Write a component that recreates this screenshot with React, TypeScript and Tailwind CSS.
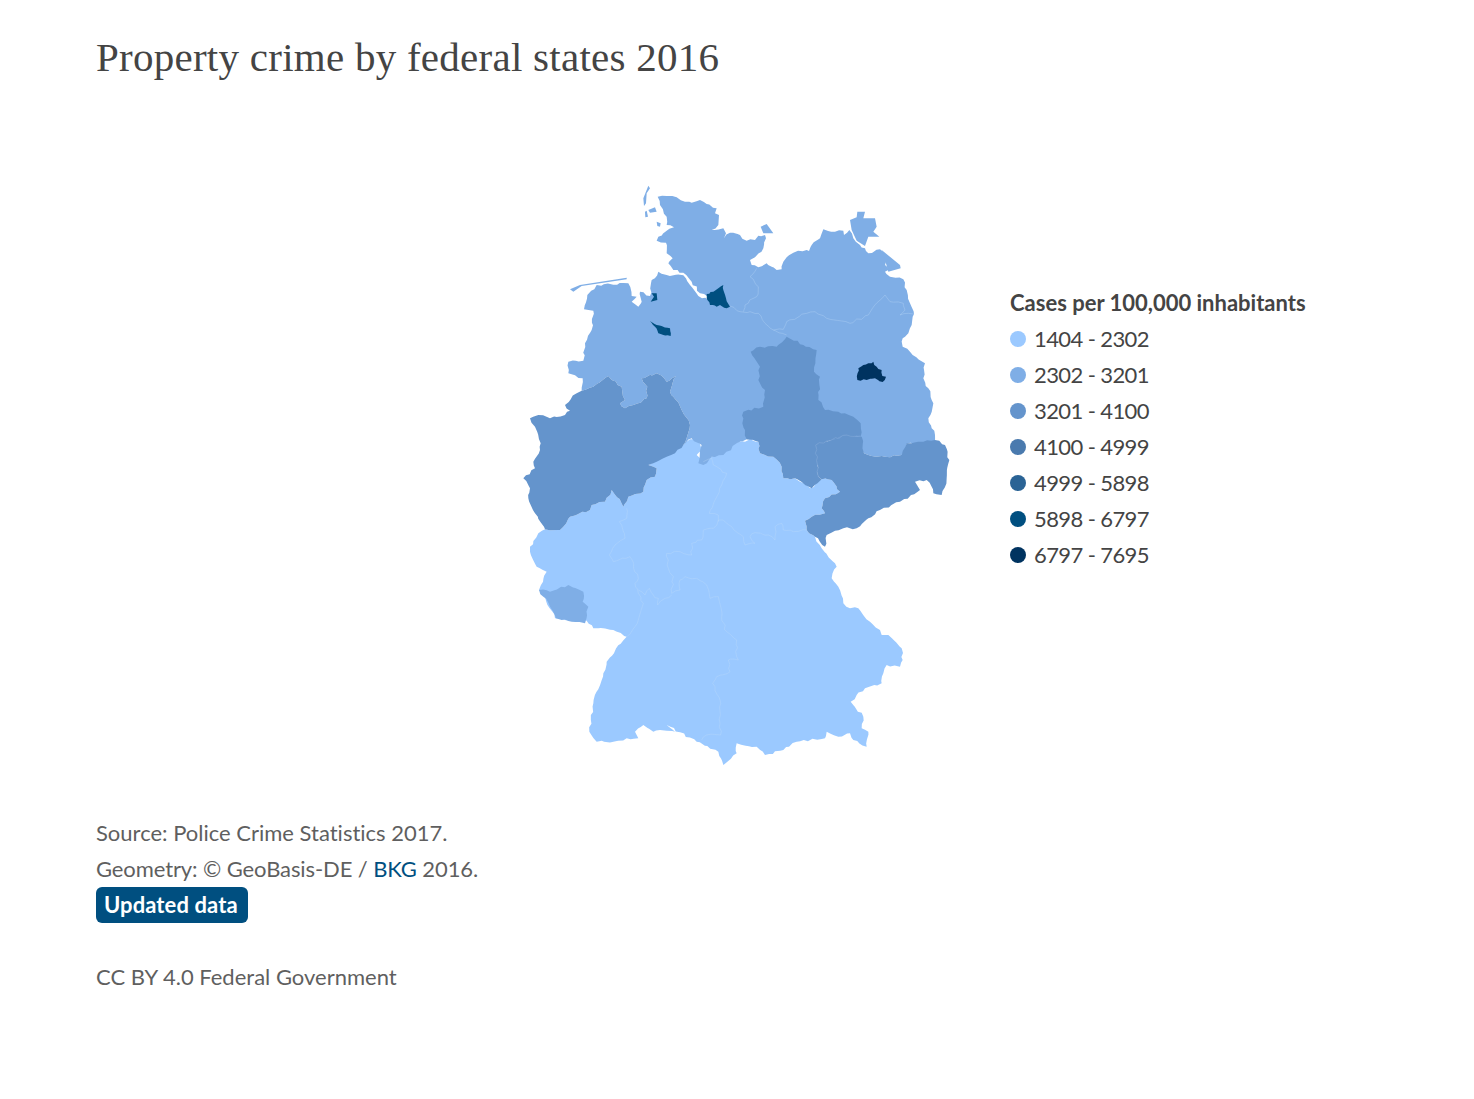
const legend = [
  { label: "1404 - 2302", color: "bg-[#9bc9ff]" },
  { label: "2302 - 3201", color: "bg-[#7faee6]" },
  { label: "3201 - 4100", color: "bg-[#6494cc]" },
  { label: "4100 - 4999", color: "bg-[#4a7aae]" },
  { label: "4999 - 5898", color: "bg-[#2a6395]" },
  { label: "5898 - 6797", color: "bg-[#004f80]" },
  { label: "6797 - 7695", color: "bg-[#003360]" },
];

// all map coordinates are in 3x px, origin at the map's top left
const north =
  "443,80 470,78 500,82 525,95 545,98 570,90 590,102 620,115 615,130 627,135 625,165 605,180 640,175 648,190 642,205 660,188 690,195 710,212 735,210 745,197 765,195 768,205 760,235 735,262 720,270 725,285 745,292 770,280 785,290 800,300 815,298 820,275 830,262 850,248 890,240 897,243 905,225 930,205 940,178 975,185 1000,182 1002,195 1018,180 1030,205 1050,225 1065,235 1075,250 1110,238 1130,262 1125,285 1135,300 1125,305 1140,320 1180,328 1190,360 1200,400 1212,432 1205,465 1195,490 1178,505 1178,530 1200,545 1245,580 1240,625 1255,655 1265,690 1270,700 1255,745 1265,775 1275,795 1275,820 1240,818 1190,822 1175,855 1125,860 1075,855 1062,850 1040,810 800,810 710,808 680,820 640,855 605,860 580,885 565,880 575,825 545,805 520,825 540,765 515,720 490,680 480,665 498,618 470,635 440,610 395,625 412,650 410,685 370,705 345,715 330,700 345,690 335,650 305,630 295,618 250,650 215,662 218,625 175,610 175,575 220,572 225,520 245,480 250,422 222,418 232,375 260,345 355,340 365,378 380,380 365,395 385,410 395,395 390,365 420,378 425,330 445,305 470,315 520,316 540,345 565,378 595,390 590,378 570,370 545,335 520,308 490,300 475,280 488,265 470,250 468,218 440,212 445,200 470,182 492,172 470,165 470,140 450,105";

const islands = [
  "415,47 420,55 410,70 408,100 402,108 400,85",
  "415,120 435,112 440,125 420,128",
  "405,125 410,122 414,140 406,142",
  "440,155 452,160 450,170 442,168",
  "752,170 770,162 790,190 760,190",
  "1020,150 1040,142 1042,125 1065,125 1060,145 1095,145 1100,170 1090,185 1108,200 1075,200 1065,228 1040,212 1025,180",
  "1115,240 1170,285 1172,295 1135,305 1125,270",
  "180,358 210,345 350,323 350,328 215,348 190,365",
];

const nrw =
  "60,745 85,735 120,745 165,735 180,722 165,705 200,670 215,662 250,650 295,618 305,630 335,650 345,690 330,700 345,715 370,705 410,685 412,650 395,625 440,610 470,635 498,618 480,665 490,680 515,720 540,765 520,825 495,850 470,860 440,875 415,885 440,895 435,920 410,930 400,965 355,980 340,1010 305,960 285,995 245,1005 240,1020 180,1040 160,1070 150,1080 105,1078 75,1030 55,985 60,955 40,925 75,895 70,875 90,840 92,820 75,770";

const anhalt =
  "722,545 750,530 800,530 830,500 880,525 920,540 912,605 930,620 925,690 945,720 985,725 1030,740 1052,760 1052,800 1010,797 950,815 920,825 925,860 925,920 935,928 905,955 855,925 820,925 815,890 790,860 750,850 745,815 715,808 710,808 705,780 697,760 700,725 760,710 765,660 745,630 750,590";

const saxony =
  "1050,800 1010,797 950,815 917,825 925,920 935,928 965,930 990,965 945,985 935,1015 945,1030 905,1040 885,1052 890,1080 915,1100 945,1130 950,1095 1000,1075 1040,1075 1075,1045 1110,1020 1170,995 1230,960 1215,935 1250,930 1265,950 1270,970 1295,975 1310,925 1318,870 1305,825 1275,810 1240,815 1190,820 1175,855 1125,860 1075,855 1062,850 1055,800";

const south =
  "60,1130 85,1090 105,1078 150,1080 160,1070 180,1040 240,1020 245,1005 285,995 305,960 340,1010 355,980 400,965 410,930 435,920 440,895 415,885 440,865 465,840 490,845 520,825 540,808 565,810 575,840 560,855 580,875 605,860 640,835 675,820 705,815 720,808 745,815 750,850 790,860 815,890 820,925 855,925 900,955 935,928 965,930 990,965 945,985 935,1015 945,1030 905,1040 885,1052 890,1080 915,1100 935,1135 975,1180 980,1190 965,1225 985,1250 1000,1300 1020,1315 1045,1315 1080,1355 1110,1380 1115,1395 1135,1395 1175,1435 1178,1470 1170,1490 1130,1485 1120,1510 1115,1540 1065,1555 1040,1575 1022,1595 1060,1640 1055,1675 1075,1685 1070,1730 1030,1710 1020,1690 985,1700 950,1685 945,1705 860,1715 820,1740 765,1755 740,1730 680,1720 680,1750 640,1785 625,1745 560,1715 470,1665 495,1685 450,1680 430,1685 400,1665 375,1685 385,1705 350,1705 310,1715 260,1715 238,1685 250,1600 280,1510 290,1475 350,1400 310,1380 250,1375 230,1352 135,1345 105,1280 87,1260 110,1205 80,1190 60,1145";

const saarland =
  "87,1260 120,1265 175,1245 220,1265 218,1295 235,1310 225,1360 185,1355 155,1350 138,1345 120,1310 100,1280";

const hamburg = "590,372 610,365 625,355 640,345 640,360 648,385 660,410 650,415 630,405 620,410 600,405 590,385";
const bremerhaven = "425,370 440,370 442,390 422,395 432,380";
const bremen = "420,453 440,465 480,475 482,498 460,495 445,490 435,470";
const berlin = "1045,595 1060,585 1075,580 1090,575 1100,590 1115,600 1117,618 1128,620 1118,636 1095,625 1070,630 1042,630";

// state borders inside a colour block
const borders = [
  "740,295 720,320 745,350 740,380 705,405 700,425",
  "660,408 690,425 720,425 745,430 765,460 790,480 830,495",
  "790,480 820,478 830,455 890,430 915,425 950,445 1020,460 1075,435 1125,375 1140,395 1180,400 1185,420 1170,435 1195,430 1212,432",
  "350,1015 350,1045 328,1055 345,1105 315,1125 298,1155 310,1175 360,1160 385,1225 375,1240 385,1270 400,1300 375,1370 350,1400",
  "385,1260 405,1275 418,1255 430,1275 445,1285 443,1305 465,1285 485,1275",
  "580,875 605,865 610,885 650,910 635,945 615,990 598,1030 625,1035 625,1055",
  "470,1150 510,1145 545,1155 545,1120 575,1110 580,1080 610,1075 625,1050 640,1050 665,1070 700,1100 705,1125 735,1120 720,1100 735,1088 775,1095 795,1110 795,1070 815,1060 820,1080 850,1085 890,1080",
  "470,1150 475,1195 490,1220 485,1270 510,1260 510,1230 525,1220 560,1225 590,1245 600,1285 625,1280 635,1345 650,1385 680,1410 680,1460 685,1470 655,1470 660,1505 620,1520 608,1540 630,1590 630,1660 632,1695 590,1695 575,1710",
];

// breaks straight segments into small wiggles, keyed on position so shared edges stay together
function rough(points: string, closed = true, amp = 3, step = 12) {
  const pts = points.split(" ").map((p) => p.split(",").map(Number));
  const out: string[] = [];
  const count = closed ? pts.length : pts.length - 1;
  for (let i = 0; i < count; i++) {
    const [ax, ay] = pts[i];
    const [bx, by] = pts[(i + 1) % pts.length];
    const n = Math.max(1, Math.round(Math.hypot(bx - ax, by - ay) / step));
    for (let k = 0; k < n; k++) {
      const x = ax + ((bx - ax) * k) / n;
      const y = ay + ((by - ay) * k) / n;
      const dx = k === 0 ? 0 : amp * Math.sin(x * 0.73 + y * 1.31);
      const dy = k === 0 ? 0 : amp * Math.sin(x * 1.17 - y * 0.59);
      out.push(`${(x + dx).toFixed(1)},${(y + dy).toFixed(1)}`);
    }
  }
  if (!closed) out.push(pts[pts.length - 1].join(","));
  return out.join(" ");
}

function GermanyMap() {
  return (
    <svg width="450" height="605" viewBox="0 0 1350 1815" className="shrink-0">
      <polygon points={rough(south)} fill="#9bc9ff" />
      <polygon points={rough(north)} fill="#7faee6" />
      {islands.map((p) => (
        <polygon key={p} points={p} fill="#7faee6" />
      ))}
      <polygon points={rough(saarland)} fill="#7faee6" />
      <polygon points={rough(nrw)} fill="#6494cc" />
      <polygon points={rough(anhalt)} fill="#6494cc" />
      <polygon points={rough(saxony)} fill="#6494cc" />
      <polyline points={rough("1052,798 1010,795 950,813 917,825 925,920", false)} fill="none" stroke="#7ea6d6" strokeWidth="2" />
      {borders.map((p, i) => (
        <polyline key={i} points={rough(p, false)} fill="none" stroke="#c4def8" strokeOpacity="0.45" strokeWidth="2" />
      ))}
      <polygon points={rough(hamburg, true, 2, 8)} fill="#004f80" />
      <polygon points={bremerhaven} fill="#004f80" />
      <polygon points={rough(bremen, true, 1.5, 8)} fill="#004f80" />
      <polygon points={rough(berlin, true, 2.5, 8)} fill="#003360" />
    </svg>
  );
}

export default function App() {
  return (
    <div className="h-[1099px] w-full bg-white pl-[96px] font-['Lato',sans-serif] text-[#5f5f5f] [font-variant-ligatures:none]">
      <h1 className="pt-[34px] font-['Liberation_Serif',serif] text-[41px] leading-[46px] font-normal tracking-[0.26px] text-[#444444]">
        Property crime by federal states 2016
      </h1>

      <div className="mt-[90px] flex items-start pl-[414px]">
        <GermanyMap />
        <div className="mt-[115px] ml-[50px] text-[#444444]">
          <p className="h-9 text-[22px] leading-9 font-bold">Cases per 100,000 inhabitants</p>
          <ul>
            {legend.map((item) => (
              <li key={item.label} className="flex h-9 items-center gap-2 text-[22px] tracking-[-0.6px]">
                <span className={`h-4 w-4 rounded-full ${item.color}`} />
                <span className="-translate-y-px">{item.label}</span>
              </li>
            ))}
          </ul>
        </div>
      </div>

      <div className="mt-[40px] text-[22px] leading-9">
        <p>Source: Police Crime Statistics 2017.</p>
        <p className="tracking-[-0.1px]">
          Geometry: © GeoBasis-DE / <span className="text-[#004f80]">BKG</span> 2016.
        </p>
        <span className="block h-9 w-[152px] rounded-md bg-[#004f80] px-2 font-bold tracking-[0.1px] text-white">Updated data</span>
        <p className="mt-9">CC BY 4.0 Federal Government</p>
      </div>
    </div>
  );
}
